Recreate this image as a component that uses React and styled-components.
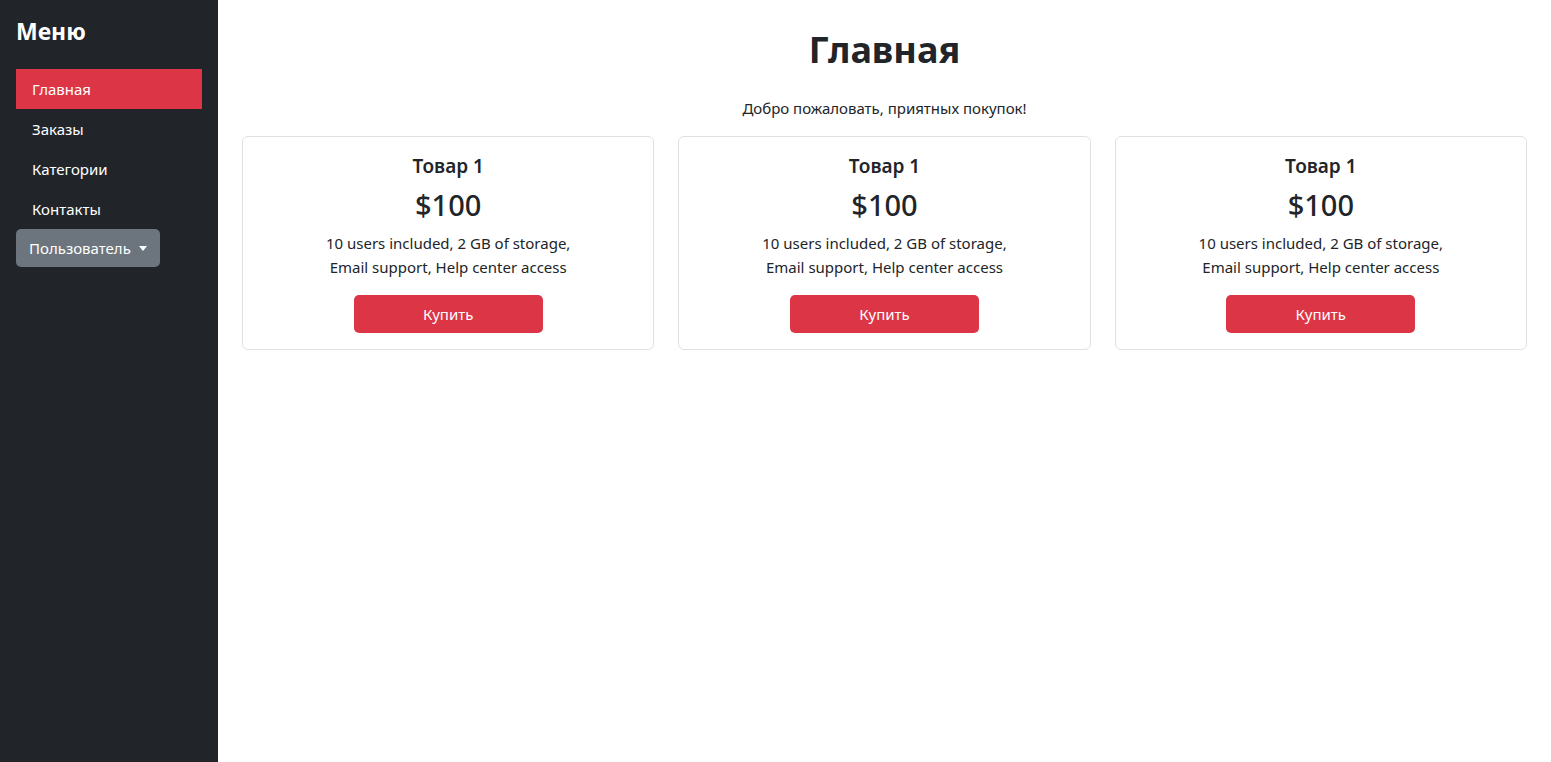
import React from 'react';
import styled, { createGlobalStyle } from 'styled-components';

const GlobalStyle = createGlobalStyle`
  html, body {
    margin: 0;
    padding: 0;
    height: 100%;
  }
  body {
    font-family: "Noto Sans", "Open Sans", sans-serif;
    color: #212529;
    background: #fff;
  }
  #root {
    height: 100%;
  }
`;

const Layout = styled.div`
  display: flex;
  min-height: 762px;
`;

const Sidebar = styled.aside`
  width: 218px;
  flex-shrink: 0;
  background: #212529;
  color: #fff;
  padding: 16px;
  box-sizing: border-box;
`;

const SidebarTitle = styled.h4`
  margin: 0 0 23px;
  font-size: 23px;
  line-height: 30px;
  font-weight: 700;
`;

const NavList = styled.nav`
  display: flex;
  flex-direction: column;
`;

const NavLink = styled.a`
  display: block;
  padding: 8px 16px;
  font-size: 15px;
  line-height: 24px;
  color: #fff;
  text-decoration: none;
  background: ${p => (p.$active ? '#dc3545' : 'transparent')};
`;

const DropdownButton = styled.button`
  display: inline-flex;
  align-items: center;
  align-self: flex-start;
  gap: 8px;
  padding: 7px 13px;
  font-family: inherit;
  font-size: 15px;
  line-height: 24px;
  color: #fff;
  background: #6c757d;
  border: none;
  border-radius: 5px;

  &::after {
    content: '';
    border-top: 5px solid #fff;
    border-left: 4.5px solid transparent;
    border-right: 4.5px solid transparent;
  }
`;

const Main = styled.main`
  flex: 1;
  padding: 26px 24px 24px;
  text-align: center;
`;

const PageTitle = styled.h1`
  margin: 0 0 22px;
  font-size: 36px;
  line-height: 48px;
  font-weight: 700;
`;

const Lead = styled.p`
  margin: 0 0 16px;
  font-size: 15px;
  line-height: 24px;
`;

const CardGrid = styled.div`
  display: grid;
  grid-template-columns: repeat(3, 1fr);
  gap: 24px;
`;

const Card = styled.div`
  border: 1px solid #dee2e6;
  border-radius: 6px;
  padding: 16px;
  display: flex;
  flex-direction: column;
  align-items: center;
`;

const CardTitle = styled.h5`
  margin: 1px 0 8px;
  font-size: 19px;
  line-height: 24px;
  font-weight: 600;
`;

const Price = styled.div`
  font-size: 29px;
  line-height: 38px;
  font-weight: 500;
  margin-bottom: 7px;
`;

const Features = styled.p`
  margin: 0 0 16px;
  font-size: 15px;
  line-height: 24px;
`;

const BuyButton = styled.button`
  width: 189px;
  height: 38px;
  font-family: inherit;
  font-size: 15px;
  color: #fff;
  background: #dc3545;
  border: none;
  border-radius: 5px;
`;

const links = ['Главная', 'Заказы', 'Категории', 'Контакты'];
const products = [1, 2, 3];

const App = () => {
  return (
    <>
      <GlobalStyle />
      <Layout>
        <Sidebar>
          <SidebarTitle>Меню</SidebarTitle>
          <NavList>
            {links.map((label, index) => (
              <NavLink href="#" key={label} $active={index === 0}>{label}</NavLink>
            ))}
            <DropdownButton>Пользователь</DropdownButton>
          </NavList>
        </Sidebar>
        <Main>
          <PageTitle>Главная</PageTitle>
          <Lead>Добро пожаловать, приятных покупок!</Lead>
          <CardGrid>
            {products.map(id => (
              <Card key={id}>
                <CardTitle>Товар 1</CardTitle>
                <Price>$100</Price>
                <Features>
                  10 users included, 2 GB of storage,<br />
                  Email support, Help center access
                </Features>
                <BuyButton>Купить</BuyButton>
              </Card>
            ))}
          </CardGrid>
        </Main>
      </Layout>
    </>
  );
};

export default App;
